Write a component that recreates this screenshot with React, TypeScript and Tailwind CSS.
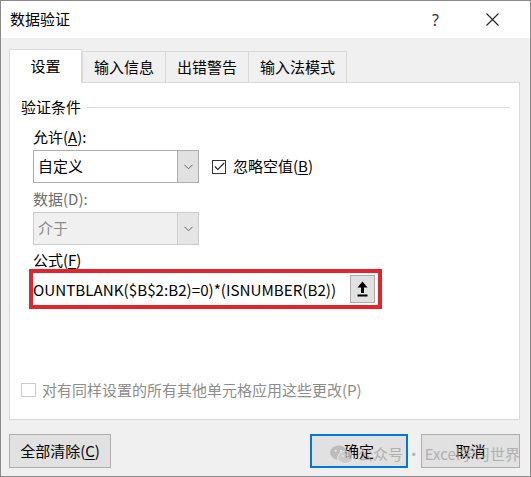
import React from "react";

const font = "font-['Microsoft_YaHei','Noto_Sans_CJK_SC',sans-serif]";

const Chevron = () => (
  <svg width="9" height="6" viewBox="0 0 9 6" fill="none">
    <path d="M0.5 0.8 L4.5 4.8 L8.5 0.8" stroke="#606060" strokeWidth="1" />
  </svg>
);

const Select = ({ value, disabled }: { value: string; disabled?: boolean }) => (
  <div
    className={`flex h-[33px] w-[166px] border ${
      disabled ? "border-[#cccccc] bg-[#f0f0f0]" : "border-[#adadad] bg-white"
    }`}
  >
    <div
      className={`flex flex-1 items-center pl-[4px] text-[15px] ${
        disabled ? "text-[#8d8d8d]" : "text-black"
      }`}
    >
      {value}
    </div>
    <div
      className={`flex w-[21px] items-center justify-center border-l ${
        disabled ? "border-[#cccccc] bg-[#e5e5e5]" : "border-[#adadad] bg-[#e1e1e1]"
      }`}
    >
      <Chevron />
    </div>
  </div>
);

const Tab = ({ label, active }: { label: string; active?: boolean }) =>
  active ? (
    <div className="relative z-10 -mb-[1px] flex h-[34px] w-[73px] items-center justify-center border border-b-0 border-[#d9d9d9] bg-white text-[15px]">
      {label}
    </div>
  ) : (
    <div className="-ml-[1px] flex h-[31px] items-center justify-center border border-b-0 border-[#d9d9d9] bg-[#f0f0f0] px-[11px] text-[15px]">
      {label}
    </div>
  );

const Button = ({ children, primary, w }: { children: React.ReactNode; primary?: boolean; w: string }) => (
  <div
    className={`flex h-[34px] items-center justify-center bg-[#e1e1e1] text-[15px] ${w} ${
      primary ? "border-2 border-[#0078d7]" : "border border-[#adadad]"
    }`}
  >
    {children}
  </div>
);

export default function App() {
  return (
    <div className={`${font} relative flex h-[477px] w-[531px] flex-col border border-[#8a8a8a] bg-[#f0f0f0] text-black`}>
      {/* title bar */}
      <div className="flex h-[37px] items-center bg-white pl-[9px]">
        <span className="text-[15px]">数据验证</span>
        <span className="ml-auto mr-[47px] font-['Segoe_UI','Noto_Sans',sans-serif] text-[16px] text-[#333]">?</span>
        <svg width="13" height="13" viewBox="0 0 13 13" className="mr-[31px]">
          <path d="M0.5 0.5 L12.5 12.5 M12.5 0.5 L0.5 12.5" stroke="#222" strokeWidth="1.1" />
        </svg>
      </div>

      <div className="flex flex-1 flex-col pl-[8px] pr-[10px]">
        {/* tabs */}
        <div className="mt-[11px] flex items-end">
          <Tab label="设置" active />
          <div className="ml-[1px] flex">
            <Tab label="输入信息" />
            <Tab label="出错警告" />
            <Tab label="输入法模式" />
          </div>
        </div>

        {/* panel */}
        <div className="flex h-[338px] flex-col border border-[#d9d9d9] bg-white">
          <div className="mt-[14px] flex items-center pl-[11px] pr-[9px]">
            <span className="text-[15px] leading-[20px]">验证条件</span>
            <div className="ml-[6px] h-[1px] flex-1 bg-[#dcdcdc]" />
          </div>

          <div className="pl-[23px]">
            <div className="mt-[10px] text-[15px] leading-[20px]">
              允许(<span className="underline underline-offset-2">A</span>):
            </div>
            <div className="mt-[3px] flex items-center">
              <Select value="自定义" />
              <div className="ml-[13px] flex h-[14px] w-[14px] items-center justify-center border border-[#333]">
                <svg width="11" height="9" viewBox="0 0 11 9">
                  <path d="M0.8 4.5 L3.8 7.5 L10.2 1" stroke="#222" strokeWidth="1.1" fill="none" />
                </svg>
              </div>
              <span className="ml-[7px] text-[15px]">
                忽略空值(<span className="underline underline-offset-2">B</span>)
              </span>
            </div>

            <div className="mt-[6px] text-[15px] leading-[20px] text-[#6d6d6d]">数据(D):</div>
            <div className="mt-[3px]">
              <Select value="介于" disabled />
            </div>

            <div className="mt-[6px] text-[15px] leading-[18px]">
              公式(<span className="underline underline-offset-2">F</span>)
            </div>
          </div>

          <div className="ml-[19px] mt-[0px] flex h-[40px] w-[353px] border-4 border-[#e3242b] bg-white">
            <div className="flex flex-1 items-center overflow-hidden whitespace-nowrap text-[15.2px]">
              OUNTBLANK($B$2:B2)=0)*(ISNUMBER(B2))
            </div>
            <div className="my-[2px] mr-[3px] flex w-[25px] items-center justify-center border border-[#adadad] bg-[#e1e1e1]">
              <svg width="11" height="16" viewBox="0 0 11 16">
                <path d="M5.5 0.5 L10.5 6.5 L7 6.5 L7 12 L4 12 L4 6.5 L0.5 6.5 Z" fill="#000" />
                <rect x="0.5" y="13.5" width="10" height="2" fill="#000" />
              </svg>
            </div>
          </div>

          <div className="ml-[11px] mt-[70px] flex items-center">
            <div className="h-[14px] w-[15px] border border-[#cccccc] bg-white" />
            <span className="ml-[6px] text-[15px] text-[#8d8d8d]">对有同样设置的所有其他单元格应用这些更改(P)</span>
          </div>
        </div>

        {/* buttons */}
        <div className="mt-[14px] flex items-center">
          <Button w="w-[102px]">
            全部清除(<span className="underline underline-offset-2">C</span>)
          </Button>
          <div className="ml-auto flex gap-[13px]">
            <Button primary w="w-[98px]">确定</Button>
            <Button w="w-[99px]">取消</Button>
          </div>
        </div>
      </div>

      {/* watermark */}
      <div className="pointer-events-none absolute left-[328px] top-[442px] flex items-center gap-[4px] text-[15px] text-[#a0a0a0] opacity-75">
        <svg width="25" height="21" viewBox="0 0 26 22">
          <ellipse cx="10" cy="9" rx="9" ry="7.5" fill="#b0b0b0" />
          <ellipse cx="17" cy="14" rx="8" ry="6.5" fill="#c4c4c4" stroke="#f0f0f0" strokeWidth="1" />
          <circle cx="7" cy="7" r="1.1" fill="#f0f0f0" />
          <circle cx="12.5" cy="7" r="1.1" fill="#f0f0f0" />
          <circle cx="14.5" cy="12.5" r="0.9" fill="#f0f0f0" />
          <circle cx="19.5" cy="12.5" r="0.9" fill="#f0f0f0" />
        </svg>
        <span>公众号 · Excel学习世界</span>
      </div>
    </div>
  );
}
